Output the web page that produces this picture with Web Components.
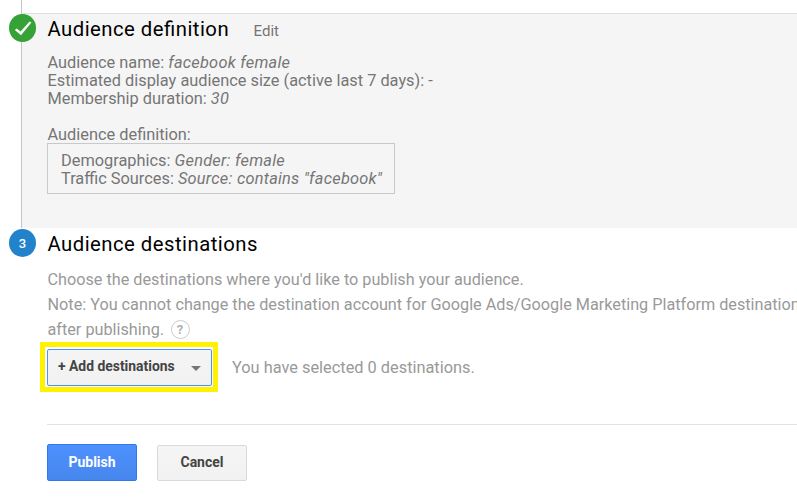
<!DOCTYPE html>
<html lang="en">
<head>
<meta charset="utf-8">
<title>Audience</title>
<style>
  body {
    margin: 0;
    overflow: hidden;
    background: #fff;
    font-family: Roboto, sans-serif;
  }
</style>
</head>
<body>
<audience-wizard></audience-wizard>

<script>
//////////////////////
// defineComponent
//////////////////////

const defineComponent = (name, styles, render) => {
  class TheComponent extends HTMLElement {
    constructor() {
      super();
      this.attachShadow({ mode: "open" });
    }

    connectedCallback() {
      this.shadowRoot.innerHTML = `<style>${styles}</style>${render(this)}`;
    }
  }

  customElements.define(name, TheComponent);
};

//////////////////////
// step-badge
//////////////////////

const check = `<svg width="27" height="28" viewBox="0 0 27 28">
  <path d="M5.8 16.1 7.7 14.4 11.6 17.6 20.6 7.6 22.4 8.6 12 21.3z" fill="#fff"/>
</svg>`;

defineComponent(
  "step-badge",
  `
  :host {
    display: flex;
    align-items: center;
    justify-content: center;
    width: 27px;
    height: 28px;
    border-radius: 50%;
    background: #2283cc;
    color: #fff;
    font-size: 13px;
    font-weight: 500;
  }
  :host([done]) { background: #36a136; }
  svg { display: block; }
  `,
  (el) => (el.hasAttribute("done") ? check : `<slot></slot>`)
);

//////////////////////
// wizard-step
//////////////////////

defineComponent(
  "wizard-step",
  `
  :host {
    display: block;
    position: relative;
    box-sizing: border-box;
    margin-left: 21px;
    padding-left: 25.5px;
    border-left: 1px solid transparent;
  }
  :host([done]) {
    height: 215px;
    border-left-color: #c6c6c6;
    background: #f5f5f5;
    box-shadow: inset 0 1px #e0e0e0;
  }
  step-badge {
    position: absolute;
    left: -13px;
    top: 1px;
  }
  header {
    display: flex;
    align-items: baseline;
    height: 32px;
    line-height: 32px;
  }
  h2 {
    margin: 0;
    color: #000;
    font-size: 20.3px;
    font-weight: 400;
    letter-spacing: 0.48px;
    font-feature-settings: "liga";
  }
  `,
  (el) => {
    const done = el.hasAttribute("done") ? "done" : "";
    return `
      <step-badge ${done}>${el.getAttribute("step") || ""}</step-badge>
      <header><h2>${el.getAttribute("heading")}</h2><slot name="action"></slot></header>
      <slot></slot>`;
  }
);

//////////////////////
// audience-summary
//////////////////////

defineComponent(
  "audience-summary",
  `
  :host {
    display: block;
    padding-top: 9px;
    color: #757575;
    font-size: 16.35px;
    line-height: 18px;
    white-space: nowrap;
  }
  i { letter-spacing: 0.24px; }
  .label { margin-top: 18px; }
  .rules {
    box-sizing: border-box;
    width: 348px;
    height: 51px;
    margin: -1px 0 0 -0.5px;
    padding: 8px 13px 6px;
    border: 1px solid #c9c9c9;
  }
  `,
  () => `
    <div>Audience name: <i>facebook female</i></div>
    <div>Estimated display audience size (active last 7 days): -</div>
    <div>Membership duration: <i>30</i></div>
    <div class="label">Audience definition:</div>
    <div class="rules">
      <div>Demographics: <i>Gender: female</i></div>
      <div>Traffic Sources: <i>Source: contains "facebook"</i></div>
    </div>`
);

//////////////////////
// help-icon
//////////////////////

defineComponent(
  "help-icon",
  `
  :host {
    display: flex;
    align-items: center;
    justify-content: center;
    box-sizing: border-box;
    width: 19px;
    height: 19px;
    border: 1px solid #ccc;
    border-radius: 50%;
    color: #b0b0b0;
    font-size: 13px;
    font-weight: 700;
    line-height: 17px;
  }
  `,
  () => `?`
);

//////////////////////
// push-button
//////////////////////

defineComponent(
  "push-button",
  `
  :host { display: block; }
  button {
    display: flex;
    align-items: center;
    justify-content: center;
    box-sizing: border-box;
    width: 90px;
    height: 36px;
    padding: 0 0 3px;
    border: 1px solid #d9d9d9;
    border-radius: 2px;
    background: linear-gradient(#f5f5f5, #f1f1f1);
    color: #444;
    font: 700 14px Roboto, sans-serif;
    white-space: nowrap;
  }
  :host([primary]) button {
    height: 37px;
    padding: 0 0 2px;
    border-color: #3079ed;
    background: linear-gradient(#4d90fe, #4787ed);
    color: #fff;
  }
  :host([menu]) button {
    justify-content: space-between;
    width: 165px;
    height: 37px;
    padding: 0 10px 4px 10px;
    border-color: #4d90fe;
    font-size: 13.9px;
  }
  svg { display: block; margin-top: 6px; }
  `,
  (el) => `<button><slot></slot>${
    el.hasAttribute("menu")
      ? `<svg width="10" height="5"><path d="M0 0h10L5 5z" fill="#777"/></svg>`
      : ""
  }</button>`
);

//////////////////////
// destination-picker
//////////////////////

defineComponent(
  "destination-picker",
  `
  :host {
    display: block;
    padding-top: 7px;
    color: #999;
    font-size: 16.23px;
    line-height: 25px;
    white-space: nowrap;
  }
  .note { display: flex; align-items: center; gap: 6.5px; }
  .row {
    display: flex;
    align-items: center;
    gap: 14px;
    margin-left: -7.5px;
    font-size: 16.35px;
  }
  .highlight {
    padding: 2px 1px 1px 2px;
    border: 5px solid #fff200;
  }
  `,
  () => `
    <div>Choose the destinations where you'd like to publish your audience.</div>
    <div>Note: You cannot change the destination account for Google Ads/Google Marketing Platform destinations</div>
    <div class="note"><span>after publishing.</span><help-icon></help-icon></div>
    <div class="row">
      <div class="highlight"><push-button menu>+ Add destinations</push-button></div>
      <span>You have selected 0 destinations.</span>
    </div>`
);

//////////////////////
// audience-wizard
//////////////////////

defineComponent(
  "audience-wizard",
  `
  :host {
    display: block;
    height: 503px;
    overflow: hidden;
  }
  .rail {
    height: 13px;
    margin-left: 21px;
    border-left: 1px solid #c6c6c6;
  }
  .edit {
    margin-left: 24.5px;
    color: #757575;
    font-size: 15px;
  }
  footer {
    display: flex;
    align-items: flex-end;
    gap: 20px;
    box-sizing: border-box;
    height: 57px;
    margin: 32px 0 0 47px;
    border-top: 1px solid #e2e2e2;
  }
  `,
  () => `
    <div class="rail"></div>
    <wizard-step done heading="Audience definition">
      <span slot="action" class="edit">Edit</span>
      <audience-summary></audience-summary>
    </wizard-step>
    <wizard-step step="3" heading="Audience destinations">
      <destination-picker></destination-picker>
    </wizard-step>
    <footer>
      <push-button primary>Publish</push-button>
      <push-button>Cancel</push-button>
    </footer>`
);
</script>
</body>
</html>
